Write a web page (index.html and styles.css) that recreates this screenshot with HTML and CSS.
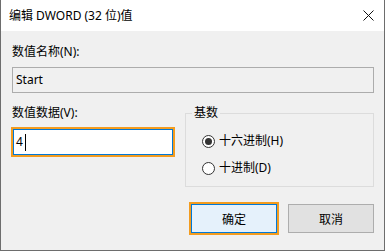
FILE: index.html
```html
<!DOCTYPE html>
<html lang="zh-CN">
    <head>
        <meta charset="UTF-8">
        <title>编辑 DWORD (32 位)值</title>
        <link rel="stylesheet" href="styles.css">
    </head>
    <body>
        <div class="window">
            <div class="titlebar">
                <span class="title">编辑 DWORD (32 位)值</span>
                <svg class="close" width="11" height="11" viewBox="0 0 11 11">
                    <path d="M0.5 0.5L10.5 10.5M10.5 0.5L0.5 10.5" stroke="#111" stroke-width="1"/>
                </svg>
            </div>

            <div class="content">
                <label class="field-label">数值名称(N):</label>
                <div class="textbox readonly">Start</div>

                <div class="row">
                    <div class="data-col">
                        <label class="field-label">数值数据(V):</label>
                        <div class="textbox focused"><span>4</span><span class="caret"></span></div>
                    </div>

                    <fieldset class="base-group">
                        <legend>基数</legend>
                        <div class="radio"><span class="dot checked"></span>十六进制(H)</div>
                        <div class="radio"><span class="dot"></span>十进制(D)</div>
                    </fieldset>
                </div>

                <div class="buttons">
                    <button class="btn default">确定</button>
                    <button class="btn">取消</button>
                </div>
            </div>
        </div>
    </body>
</html>
```

FILE: styles.css
```css
body {
    margin: 0;
    font-family: "Noto Sans", "Noto Sans CJK SC", sans-serif;
    font-size: 12px;
    color: #000;
}
.window {
    width: 385px;
    height: 251px;
    box-sizing: border-box;
    border: 1px solid #6d6d6d;
    border-top: none;
    background: #f0f0f0;
    display: flex;
    flex-direction: column;
}
.titlebar {
    height: 31px;
    flex: none;
    background: #fff;
    display: flex;
    align-items: center;
    justify-content: space-between;
    padding: 0 10px 0 8px;
}
.title {
    line-height: 16px;
}
.close {
    display: block;
}
.content {
    padding: 13px 10px 0 11px;
}
.field-label {
    display: block;
    line-height: 16px;
}
.textbox {
    box-sizing: border-box;
    line-height: 22px;
}
.textbox.readonly {
    margin-top: 7px;
    height: 26px;
    border: 1px solid #acacac;
    padding: 1px 3px;
}
.textbox.focused {
    margin: 8px 0 0 1px;
    width: 160px;
    height: 26px;
    background: #fff;
    border: 1px solid #0078d7;
    box-shadow: 0 0 0 2px #f39c1f;
    padding: 1px 2px;
    display: flex;
    align-items: center;
}
.caret {
    display: inline-block;
    width: 1px;
    height: 17px;
    margin-left: 2px;
    background: #000;
}
.row {
    display: flex;
    justify-content: space-between;
    margin-top: 12px;
}
.data-col {
    width: 163px;
}
.base-group {
    width: 189px;
    box-sizing: border-box;
    margin: 0;
    border: 1px solid #dcdcdc;
    padding: 0 0 10px 6px;
}
.base-group legend {
    padding: 0 2px;
    line-height: 16px;
}
.radio {
    display: flex;
    align-items: center;
    line-height: 16px;
    margin: 11px 0 0 10px;
}
.radio:first-of-type {
    margin-top: 12px;
}
.dot {
    width: 13px;
    height: 13px;
    box-sizing: border-box;
    border: 1px solid #333;
    border-radius: 50%;
    background: #fff;
    margin-right: 4px;
    display: flex;
    align-items: center;
    justify-content: center;
}
.dot.checked::after {
    content: "";
    width: 7px;
    height: 7px;
    border-radius: 50%;
    background: #333;
}
.buttons {
    display: flex;
    justify-content: flex-end;
    gap: 11px;
    margin-top: 17px;
}
.btn {
    width: 86px;
    height: 29px;
    box-sizing: border-box;
    font: inherit;
    color: #000;
    background: #e1e1e1;
    border: 1px solid #adadad;
    padding: 0;
}
.btn.default {
    background: #e5f1fb;
    border-color: #0078d7;
    box-shadow: 0 0 0 2px #f39c1f;
}
```
